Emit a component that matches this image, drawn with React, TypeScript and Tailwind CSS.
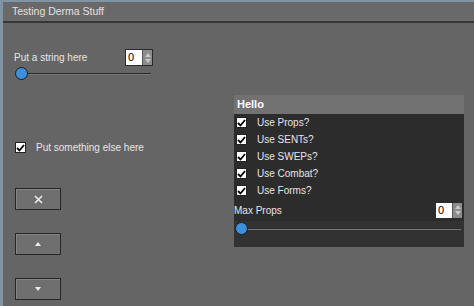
import React from 'react';

const font = { fontFamily: '"Liberation Sans", Arial, sans-serif' };

function NumberBox() {
    return (
        <div className="flex h-[17px] border border-[#2a2a2a]">
            <div className="w-[16px] bg-white text-[11px] leading-[15px] pl-[2px] text-black">0</div>
            <div className="w-[10px] bg-[#8c8c8c] flex flex-col items-center justify-center gap-[2px] border-l border-[#555]">
                <svg width="6" height="4" viewBox="0 0 6 4"><path d="M0 4 L3 0 L6 4 Z" fill="#c8c8c8" /></svg>
                <svg width="6" height="4" viewBox="0 0 6 4"><path d="M0 0 L3 4 L6 0 Z" fill="#c8c8c8" /></svg>
            </div>
        </div>
    );
}

function Slider({ width }: { width: number }) {
    return (
        <div className="relative h-[14px]" style={{ width }}>
            <div className="absolute left-[6px] right-0 top-[6px] h-[1px] bg-[#2a2a2a]" />
            <div className="absolute left-[6px] right-0 top-[7px] h-[1px] bg-[#7a7a7a]" />
            <div className="absolute left-0 top-0 w-[13px] h-[13px] rounded-full bg-[#3d8fdc] border border-[#1c1c1c]" />
        </div>
    );
}

function Check() {
    return (
        <div className="w-[11px] h-[11px] bg-white border border-[#222] flex items-center justify-center">
            <svg width="9" height="8" viewBox="0 0 9 8"><path d="M1 4 L3.5 6.5 L8 1" stroke="#000" strokeWidth="1.8" fill="none" /></svg>
        </div>
    );
}

function Btn({ children }: { children: React.ReactNode }) {
    return (
        <div className="w-[46px] h-[22px] bg-[#6f6f6f] border border-[#262626] shadow-[inset_1px_1px_0_#858585] flex items-center justify-center">
            {children}
        </div>
    );
}

const items = ['Use Props?', 'Use SENTs?', 'Use SWEPs?', 'Use Combat?', 'Use Forms?'];

export default function App() {
    return (
        <div className="w-[474px] h-[306px] overflow-hidden bg-[#656565] border-l-[3px] border-t-[2px] border-[#7f94a5] flex flex-col" style={font}>
            <div className="h-[21px] shrink-0 bg-[#696969] border-b-2 border-[#363636] flex items-center pl-[9px] text-[10.5px] text-[#e2e2e2]">
                Testing Derma Stuff
            </div>
            <div className="flex flex-1">
                <div className="w-[231px] shrink-0 pl-[11px] pt-[26px] flex flex-col">
                    <div className="flex items-center w-[139px] justify-between">
                        <span className="text-[10px] text-[#e6e6e6] -mt-[1px]">Put a string here</span>
                        <NumberBox />
                    </div>
                    <div className="mt-[1px] pl-[1px]">
                        <Slider width={136} />
                    </div>
                    <div className="mt-[59px] flex items-center gap-[10px] pl-[1px]">
                        <Check />
                        <span className="text-[10px] text-[#e6e6e6]">Put something else here</span>
                    </div>
                    <div className="mt-[33px] pl-[1px] flex flex-col gap-[23px]">
                        <Btn>
                            <svg width="9" height="9" viewBox="0 0 9 9"><path d="M1 1 L8 8 M8 1 L1 8" stroke="#ececec" strokeWidth="1.6" /></svg>
                        </Btn>
                        <Btn>
                            <svg width="6" height="4" viewBox="0 0 6 4"><path d="M0 4 L3 0 L6 4 Z" fill="#ececec" /></svg>
                        </Btn>
                        <Btn>
                            <svg width="6" height="4" viewBox="0 0 6 4"><path d="M0 0 L3 4 L6 0 Z" fill="#ececec" /></svg>
                        </Btn>
                    </div>
                </div>
                <div className="pt-[72px]">
                    <div className="w-[230px] flex flex-col">
                        <div className="h-[19px] bg-[#727272] flex items-center pl-[3px] text-[11px] font-bold text-white">Hello</div>
                        <div className="bg-[#2c2c2c] flex flex-col">
                            {items.map((t) => (
                                <div key={t} className="h-[17px] flex items-center pl-[2px] gap-[10px]">
                                    <Check />
                                    <span className="text-[10px] text-[#e6e6e6]">{t}</span>
                                </div>
                            ))}
                            <div className="h-[22px] flex items-center justify-between pr-[1px]">
                                <span className="text-[10px] text-[#e6e6e6]">Max Props</span>
                                <NumberBox />
                            </div>
                            <div className="bg-[#323232] h-[26px] pl-[1px] pt-[1px]">
                                <Slider width={226} />
                            </div>
                        </div>
                    </div>
                </div>
            </div>
        </div>
    );
}
